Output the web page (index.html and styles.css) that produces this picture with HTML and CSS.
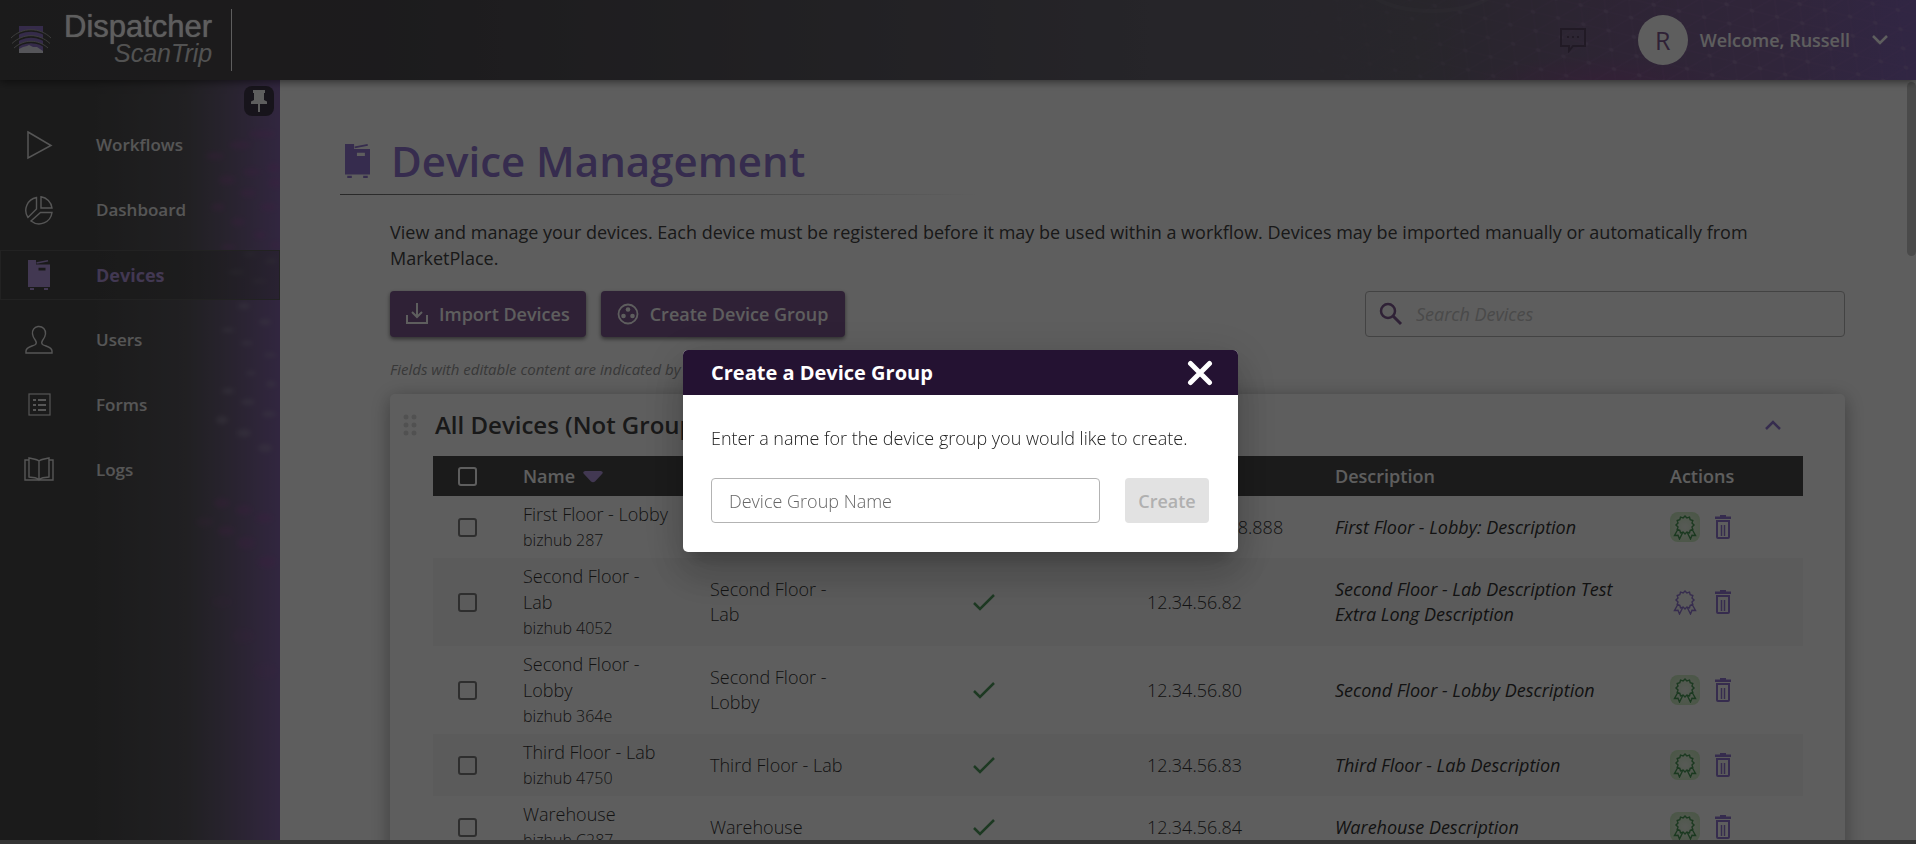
FILE: index.html
```html
<!DOCTYPE html>
<html lang="en">
<head>
<meta charset="utf-8">
<title>Dispatcher ScanTrip - Device Management</title>
<link rel="stylesheet" href="styles.css">
</head>
<body>
<svg class="defs" aria-hidden="true">
  <symbol id="printer" viewBox="0 0 22 30"><path d="M0 0h8v4.500h14V27H0zM10.500 7.700v2.800h7V7.700zM2 28h4v2H2zM16 28h4v2h-4z" fill="currentColor" fill-rule="evenodd"/><path d="M8.500 3L20 .8" stroke="currentColor" stroke-width="1.500"/></symbol>
  <symbol id="award" viewBox="0 0 24 26"><path d="M12 2L13.900 4 16.500 3.200 17.200 5.800 19.800 6.500 19 9.100 21 11 19 12.900 19.800 15.500 17.200 16.200 16.500 18.800 13.900 18 12 20 10.100 18 7.500 18.800 6.800 16.200 4.200 15.500 5 12.900 3 11 5 9.100 4.200 6.500 6.800 5.800 7.500 3.200 10.100 4ZM4.500 16L1.500 21.500 5 21.300 6.500 25 9.500 19M19.500 16L22.500 21.500 19 21.300 17.500 25 14.500 19" fill="none" stroke="currentColor" stroke-width="1.400"/></symbol>
  <symbol id="trash" viewBox="0 0 18 24"><path d="M6 0h6v1.500h5V4H1V1.500h5z" fill="currentColor"/><path d="M3 6h12v16a1 1 0 0 1-1 1H4a1 1 0 0 1-1-1z" fill="none" stroke="currentColor" stroke-width="2"/><path d="M7.500 10v11M10.500 10v11" stroke="currentColor" stroke-width="1.500"/></symbol>
  <symbol id="check" viewBox="0 0 24 18"><path d="M2 10l6 6L22 2" fill="none" stroke="currentColor" stroke-width="2.500"/></symbol>
</svg>

<div class="app">
  <header class="topbar">
    <svg class="topbar-art" viewBox="0 0 616 80" preserveAspectRatio="xMaxYMid slice" aria-hidden="true">
      <defs>
        <pattern id="mesh" width="26" height="18" patternUnits="userSpaceOnUse" patternTransform="rotate(14) skewX(22)">
          <path d="M0 9h26M13 0v18M0 18L26 0" stroke="#b07fc8" stroke-opacity=".22" fill="none"/>
          <ellipse cx="13" cy="9" rx="2.500" ry="1.800" fill="#b9a6c8" fill-opacity=".35"/>
        </pattern>
        <linearGradient id="fade"><stop offset="0" stop-color="#fff" stop-opacity="0"/><stop offset=".6" stop-color="#fff" stop-opacity=".8"/><stop offset="1" stop-color="#fff" stop-opacity=".7"/></linearGradient>
        <mask id="fademask"><rect width="616" height="80" fill="url(#fade)"/></mask>
        <radialGradient id="glow"><stop offset="0" stop-color="#a04a9a" stop-opacity=".4"/><stop offset="1" stop-color="#a04a9a" stop-opacity="0"/></radialGradient>
      </defs>
      <ellipse cx="300" cy="80" rx="130" ry="24" fill="url(#glow)"/>
      <rect width="616" height="80" fill="url(#mesh)" mask="url(#fademask)"/>
      <ellipse cx="132" cy="-14" rx="64" ry="25" fill="none" stroke="#8d8d98" stroke-opacity=".2" stroke-width="4"/>
    </svg>
    <a class="brand" href="#" aria-label="Dispatcher ScanTrip">
      <svg class="brand-mark" viewBox="0 0 42 30" aria-hidden="true">
        <rect x="9" y="1" width="24" height="27" fill="#8f74c9"/>
        <path d="M9 28v-4l4-2 4-1 2-1 4 2 4 0 6 4v2z" fill="#e6e6f2"/>
        <g fill="none" stroke="#4b4b4b" stroke-width="2"><path d="M1 14C12 3 30 3 41 14"/><path d="M2 19.500C13 9 29 9 40 19.500"/><path d="M4 24C14 15 28 15 38 24"/></g>
        <g fill="none" stroke="#a5a5a5" stroke-width="1"><path d="M1 13C12 2 30 2 41 13"/><path d="M2 18.500C13 8 29 8 40 18.500"/><path d="M4 23C14 14 28 14 38 23"/></g>
      </svg>
      <span class="brand-text"><span class="brand-name">Dispatcher</span><span class="brand-sub">ScanTrip</span></span>
    </a>
    <div class="account">
      <button class="icon-button chat" aria-label="Messages">
        <svg width="26" height="26" viewBox="0 0 26 26" fill="none" stroke="currentColor" stroke-width="2"><path d="M1 2h24v17H13l-4 5v-5H1z"/><path d="M7 10h2M12 10h2M17 10h2" stroke-width="2"/></svg>
      </button>
      <span class="avatar">R</span>
      <button class="welcome">Welcome, Russell
        <svg width="16" height="12" viewBox="0 0 16 12" fill="none" stroke="currentColor" stroke-width="2.500"><path d="M1 2l7 7 7-7"/></svg>
      </button>
    </div>
  </header>

  <div class="body">
    <nav class="sidebar" aria-label="Main">
      <svg class="sidebar-art" viewBox="0 0 280 760" preserveAspectRatio="xMaxYMin slice" aria-hidden="true">
        <defs><filter id="soft"><feGaussianBlur stdDeviation="2"/></filter></defs>
        <g filter="url(#soft)" fill="#b34fb0" fill-opacity=".22">
          <ellipse cx="262" cy="54" rx="13" ry="4"/><ellipse cx="240" cy="65" rx="11" ry="4"/><ellipse cx="215" cy="76" rx="9" ry="4"/><ellipse cx="274" cy="88" rx="7" ry="5"/><ellipse cx="252" cy="92" rx="9" ry="4"/><ellipse cx="227" cy="100" rx="8" ry="5"/><ellipse cx="275" cy="103" rx="7" ry="5"/><ellipse cx="248" cy="113" rx="8" ry="4"/><ellipse cx="268" cy="127" rx="8" ry="4"/><ellipse cx="218" cy="127" rx="7" ry="4"/><ellipse cx="238" cy="142" rx="7" ry="4"/><ellipse cx="260" cy="155" rx="6" ry="4"/><ellipse cx="228" cy="167" rx="7" ry="3"/><ellipse cx="276" cy="165" rx="6" ry="3"/>
          <ellipse cx="222" cy="423" rx="8" ry="5"/><ellipse cx="244" cy="430" rx="8" ry="5"/><ellipse cx="264" cy="438" rx="8" ry="5"/><ellipse cx="226" cy="451" rx="8" ry="5"/><ellipse cx="246" cy="463" rx="9" ry="6"/><ellipse cx="267" cy="482" rx="9" ry="6"/><ellipse cx="205" cy="442" rx="9" ry="5" fill-opacity=".12"/><ellipse cx="222" cy="522" rx="11" ry="6" fill-opacity=".08"/><ellipse cx="243" cy="556" rx="11" ry="7" fill-opacity=".1"/><ellipse cx="265" cy="591" rx="11" ry="8" fill-opacity=".1"/>
        </g>
        <g filter="url(#soft)" fill="#a9a0b8" fill-opacity=".38">
          <ellipse cx="250" cy="174" rx="6" ry="2"/><ellipse cx="271" cy="181" rx="6" ry="3"/><ellipse cx="236" cy="192" rx="8" ry="2"/><ellipse cx="259" cy="201" rx="7" ry="2"/><ellipse cx="244" cy="226" rx="6" ry="3"/><ellipse cx="265" cy="242" rx="6" ry="3"/><ellipse cx="228" cy="250" rx="6" ry="2"/><ellipse cx="247" cy="263" rx="6" ry="2"/><ellipse cx="270" cy="275" rx="6" ry="2"/><ellipse cx="251" cy="293" rx="5" ry="2"/><ellipse cx="271" cy="304" rx="5" ry="3"/><ellipse cx="228" cy="311" rx="6" ry="3"/><ellipse cx="248" cy="322" rx="7" ry="3"/><ellipse cx="269" cy="334" rx="7" ry="3"/><ellipse cx="222" cy="340" rx="6" ry="4"/><ellipse cx="244" cy="353" rx="7" ry="4"/><ellipse cx="265" cy="368" rx="7" ry="4"/>
        </g>
      </svg>
      <div class="pin-row">
        <button class="pin" aria-label="Pin menu"><svg width="16" height="22" viewBox="0 0 16 22"><path d="M2 0h12v3h-1v7l3 1.500V14H9v8H7v-8H0v-2.500L3 10V3H2z" fill="currentColor"/></svg></button>
      </div>
      <a class="nav-item" href="#"><svg width="30" height="30" viewBox="0 0 30 30" fill="none" stroke="currentColor" stroke-width="1.500"><path d="M4 2l23 13.500L4 28z"/></svg>Workflows</a>
      <a class="nav-item" href="#"><svg width="30" height="30" viewBox="0 0 30 30" fill="none" stroke="currentColor" stroke-width="1.400"><path d="M12.500 2.500A13 13 0 0 0 4 22.500l8.500-8.500zM17 1.800A13 13 0 0 1 28 13H17zM28 17.500H16.500L7 26A13 13 0 0 0 28 17.500z"/></svg>Dashboard</a>
      <a class="nav-item active" href="#" aria-current="page"><svg width="30" height="30" viewBox="-4 0 30 30"><use href="#printer" width="22" height="30"/></svg>Devices</a>
      <a class="nav-item" href="#"><svg width="30" height="30" viewBox="0 0 30 30" fill="none" stroke="currentColor" stroke-width="1.400"><path d="M14 1.500c-4 .5-6 4-5.500 7.500.3 3 1.500 4.500 3 6.500 1 1.500 1 3 0 4C8 21.500 2 22 2 26v2h26v-2c0-4-6-4.500-9.500-6.500-1-1-1-2.500 0-4 1.500-2 2.700-3.500 3-6.500C22 5 19 1 14 1.500z"/></svg>Users</a>
      <a class="nav-item" href="#"><svg width="30" height="30" viewBox="0 0 30 30" fill="none" stroke="currentColor"><rect x="5" y="4" width="21" height="21" stroke-width="1.200"/><path d="M9 10h3M9 15h3M9 20h3M14 10h8M14 15h8M14 20h8" stroke-width="2"/></svg>Forms</a>
      <a class="nav-item" href="#"><svg width="30" height="30" viewBox="0 0 30 30" fill="none" stroke="currentColor" stroke-width="1.400"><path d="M15 6c-2-2-6-2-10-3v19c4 1 8 0 10 3 2-3 6-2 10-3V3c-4 1-8 1-10 3zM15 6v19M5 5H1v20h28V5h-4"/></svg>Logs</a>
    </nav>

    <main class="content">
      <h1 class="page-title"><svg class="title-icon" viewBox="0 0 22 30" preserveAspectRatio="none" aria-hidden="true"><use href="#printer"/></svg>Device Management</h1>
      <div class="inner">
        <p class="intro">View and manage your devices. Each device must be registered before it may be used within a workflow. Devices may be imported manually or automatically from MarketPlace.</p>
        <div class="toolbar">
          <button class="primary"><svg width="22" height="22" viewBox="0 0 22 22" fill="none" stroke="currentColor" stroke-width="2"><path d="M11 0v14M6 9l5 5 5-5M1 12v8h20v-8"/></svg>Import Devices</button>
          <button class="primary"><svg width="22" height="22" viewBox="0 0 22 22"><circle cx="11" cy="11" r="9.500" fill="none" stroke="currentColor" stroke-width="1.800"/><g fill="currentColor"><circle cx="11" cy="6.500" r="2.300"/><circle cx="6.500" cy="13" r="2.300"/><circle cx="15.500" cy="13" r="2.300"/></g></svg>Create Device Group</button>
          <label class="search"><svg width="24" height="24" viewBox="0 0 24 24" fill="none" stroke="currentColor" aria-hidden="true"><circle cx="9" cy="9" r="7" stroke-width="2.500"/><path d="M14 14l8 8" stroke-width="3"/></svg><input type="search" placeholder="Search Devices" aria-label="Search Devices"></label>
        </div>
        <p class="note">Fields with editable content are indicated by an italic font.</p>

        <section class="card">
          <div class="card-head">
            <svg class="drag" width="14" height="22" viewBox="0 0 14 22" fill="currentColor" aria-hidden="true"><circle cx="3" cy="3" r="2.500"/><circle cx="11" cy="3" r="2.500"/><circle cx="3" cy="11" r="2.500"/><circle cx="11" cy="11" r="2.500"/><circle cx="3" cy="19" r="2.500"/><circle cx="11" cy="19" r="2.500"/></svg>
            <h2>All Devices (Not Grouped)</h2>
            <button class="icon-button collapse" aria-label="Collapse group"><svg width="16" height="12" viewBox="0 0 16 12" fill="none" stroke="currentColor" stroke-width="2.500"><path d="M1 10l7-7 7 7"/></svg></button>
          </div>
          <table class="devices">
            <colgroup><col class="c-check"><col class="c-name"><col class="c-name"><col class="c-reg"><col class="c-ip"><col class="c-desc"><col class="c-act"></colgroup>
            <thead><tr>
              <th class="tick"><input type="checkbox" aria-label="Select all devices"></th>
              <th>Name <svg class="sort" width="20" height="12" viewBox="0 0 20 12" aria-hidden="true"><path d="M2 0h16q3 1 1 3l-7 7.500q-2 1.500-4 0L1 3Q-1 1 2 0z" fill="currentColor"/></svg></th>
              <th>Location</th><th class="reg">Registered</th><th class="ip">Address</th><th>Description</th><th>Actions</th>
            </tr></thead>
            <tbody>
              <tr><td class="tick"><input type="checkbox" aria-label="Select First Floor - Lobby"></td><td class="name">First Floor - Lobby<small>bizhub 287</small></td><td>First Floor - Lobby</td><td class="reg"><svg width="24" height="18"><use href="#check"/></svg></td><td class="ip">888.888.888.888</td><td class="desc">First Floor - Lobby: Description</td><td><div class="actions"><button class="award on" aria-label="Certificate"><svg width="24" height="26"><use href="#award"/></svg></button><button class="trash" aria-label="Delete"><svg width="18" height="24"><use href="#trash"/></svg></button></div></td></tr>
              <tr><td class="tick"><input type="checkbox" aria-label="Select Second Floor - Lab"></td><td class="name">Second Floor - Lab<small>bizhub 4052</small></td><td>Second Floor - Lab</td><td class="reg"><svg width="24" height="18"><use href="#check"/></svg></td><td class="ip">12.34.56.82</td><td class="desc">Second Floor - Lab Description Test Extra Long Description</td><td><div class="actions"><button class="award" aria-label="Certificate"><svg width="24" height="26"><use href="#award"/></svg></button><button class="trash" aria-label="Delete"><svg width="18" height="24"><use href="#trash"/></svg></button></div></td></tr>
              <tr><td class="tick"><input type="checkbox" aria-label="Select Second Floor - Lobby"></td><td class="name">Second Floor - Lobby<small>bizhub 364e</small></td><td>Second Floor - Lobby</td><td class="reg"><svg width="24" height="18"><use href="#check"/></svg></td><td class="ip">12.34.56.80</td><td class="desc">Second Floor - Lobby Description</td><td><div class="actions"><button class="award on" aria-label="Certificate"><svg width="24" height="26"><use href="#award"/></svg></button><button class="trash" aria-label="Delete"><svg width="18" height="24"><use href="#trash"/></svg></button></div></td></tr>
              <tr><td class="tick"><input type="checkbox" aria-label="Select Third Floor - Lab"></td><td class="name">Third Floor - Lab<small>bizhub 4750</small></td><td>Third Floor - Lab</td><td class="reg"><svg width="24" height="18"><use href="#check"/></svg></td><td class="ip">12.34.56.83</td><td class="desc">Third Floor - Lab Description</td><td><div class="actions"><button class="award on" aria-label="Certificate"><svg width="24" height="26"><use href="#award"/></svg></button><button class="trash" aria-label="Delete"><svg width="18" height="24"><use href="#trash"/></svg></button></div></td></tr>
              <tr><td class="tick"><input type="checkbox" aria-label="Select Warehouse"></td><td class="name">Warehouse<small>bizhub C287</small></td><td>Warehouse</td><td class="reg"><svg width="24" height="18"><use href="#check"/></svg></td><td class="ip">12.34.56.84</td><td class="desc">Warehouse Description</td><td><div class="actions"><button class="award on" aria-label="Certificate"><svg width="24" height="26"><use href="#award"/></svg></button><button class="trash" aria-label="Delete"><svg width="18" height="24"><use href="#trash"/></svg></button></div></td></tr>
            </tbody>
          </table>
        </section>
      </div>
      <div class="scroll-thumb"></div>
    </main>
  </div>
</div>

<div class="overlay">
  <div class="modal" role="dialog" aria-modal="true" aria-labelledby="modal-title">
    <div class="modal-head">
      <h2 id="modal-title">Create a Device Group</h2>
      <button class="icon-button close" aria-label="Close"><svg width="26" height="26" viewBox="0 0 26 26" stroke="currentColor" stroke-width="5" stroke-linecap="round"><path d="M3.500 3.500l19 19M22.500 3.500l-19 19"/></svg></button>
    </div>
    <form class="modal-body">
      <label for="group-name">Enter a name for the device group you would like to create.</label>
      <div class="modal-row">
        <input id="group-name" type="text" placeholder="Device Group Name">
        <button type="button" class="create" disabled>Create</button>
      </div>
    </form>
  </div>
</div>
</body>
</html>
```

FILE: styles.css
```css
* { box-sizing: border-box; }

body {
  margin: 0;
  height: 100vh;
  overflow: hidden;
  background: #8d8d8d;
  color: #444;
  font-family: "Open Sans", "Noto Sans", sans-serif;
  font-size: 18px;
  line-height: 26px;
}

h1, h2, p { margin: 0; }
button, input { font: inherit; color: inherit; }
button { padding: 0; border: 0; background: none; }
a { color: inherit; text-decoration: none; }
svg { display: block; flex: none; }
.defs { position: absolute; width: 0; height: 0; }

.app {
  display: flex;
  flex-direction: column;
  height: calc(100vh - 4px);
  overflow: hidden;
  background: #fff;
}

/* Top bar */
.topbar {
  position: relative;
  z-index: 2;
  display: flex;
  flex: none;
  align-items: center;
  justify-content: space-between;
  height: 80px;
  padding: 0 28px 0 10px;
  background: linear-gradient(90deg, #4b4b4b 0, #4d4b4f 20%, #67646f 60%, #6c6775 74%, #7d6390 85%, #84669f 93%, #8567b8 100%);
  box-shadow: 0 2px 8px rgba(0, 0, 0, .5);
}
.topbar-art { position: absolute; top: 0; right: 0; width: 616px; height: 80px; }

.brand {
  display: flex;
  align-items: center;
  gap: 12px;
  height: 62px;
  padding-right: 19px;
  border-right: 1px solid #fff;
  color: #fff;
  font-family: "Liberation Sans", Arial, sans-serif;
}
.brand-mark { width: 42px; height: 30px; }
.brand-text { display: flex; flex-direction: column; align-items: flex-end; line-height: 26px; font-size: 31px; }
.brand-name { text-shadow: 0 0 1px #fff; }
.brand-sub { font-size: 25px; font-style: italic; color: #ddd; }

.account { position: relative; display: flex; align-items: center; }
.chat { margin-right: 52px; color: #5b4866; }
.avatar {
  display: grid;
  place-items: center;
  width: 50px;
  height: 50px;
  margin-right: 12px;
  border-radius: 50%;
  background: #fff;
  color: #7f5992;
  font-size: 25px;
  font-weight: 500;
}
.welcome { display: flex; align-items: center; gap: 22px; color: #fff; font-weight: 600; }

/* Sidebar */
.body { display: flex; flex: 1; min-height: 0; }
.sidebar {
  position: relative;
  flex: none;
  width: 280px;
  background: linear-gradient(90deg, #4b4b4b 0, #4b4b4b 34%, #59575d 66%, #6b5f7a 80%, #8768ac 100%);
  color: #e8e8e8;
}
.sidebar-art { position: absolute; top: 0; right: 0; width: 280px; height: 100%; }
.pin-row { position: relative; display: flex; justify-content: flex-end; height: 40px; padding: 6px 6px 0 0; }
.pin {
  display: grid;
  place-items: center;
  width: 30px;
  height: 30px;
  border-radius: 8px;
  background: #40384b;
  color: #fff;
}
.nav-item {
  position: relative;
  display: flex;
  align-items: center;
  gap: 42px;
  height: 50px;
  margin-bottom: 15px;
  padding-left: 23px;
  border: 1px solid transparent;
  font-size: 17px;
  font-weight: 600;
}
.nav-item.active {
  border-color: #5c5c5c;
  background: linear-gradient(90deg, #474747, rgba(71, 71, 71, .35));
  color: #b297de;
  font-size: 18px;
  font-weight: 700;
}

/* Page content */
.content { position: relative; flex: 1; min-width: 0; overflow: hidden; padding: 50px 71px 0 60px; }
.page-title {
  display: flex;
  align-items: center;
  gap: 21px;
  height: 65px;
  padding: 0 0 4px 5px;
  background: linear-gradient(90deg, #6d6d6d, #c0c0c0 60%, transparent) left bottom / 640px 1px no-repeat;
  color: #9277d3;
  font-size: 42px;
  font-weight: 600;
}
.title-icon { width: 25px; height: 34px; }
.inner { padding-left: 50px; }
.intro { margin-top: 24px; }
.toolbar { display: flex; gap: 15px; margin-top: 20px; }
.primary {
  display: flex;
  align-items: center;
  gap: 11px;
  height: 46px;
  padding: 0 16px;
  border-radius: 4px;
  background: #7f5992;
  box-shadow: 0 2px 4px rgba(0, 0, 0, .5);
  color: #fff;
  font-weight: 600;
}
.search {
  display: flex;
  align-items: center;
  gap: 13px;
  width: 480px;
  height: 46px;
  margin-left: auto;
  padding: 0 13px;
  border: 1px solid #b5b5b5;
  border-radius: 4px;
  color: #7f5992;
}
.search input { flex: 1; min-width: 0; padding: 0; border: 0; outline: 0; background: none; font-style: italic; }
.search input::placeholder { color: #c8c8c8; opacity: 1; }
.note { margin-top: 19px; color: #999; font-size: 15px; font-style: italic; }

.card {
  height: 600px;
  margin-top: 12px;
  padding: 0 42px 0 43px;
  border-radius: 5px;
  background: #fff;
  box-shadow: 0 4px 20px rgba(0, 0, 0, .35);
}
.card-head { display: flex; align-items: center; height: 62px; margin-left: -30px; padding-right: 22px; }
.card-head h2 { flex: 1; padding-left: 18px; font-size: 24px; font-weight: 600; }
.drag { color: #dcdcdc; }
.collapse { color: #9277d3; }

.devices { width: 100%; border-collapse: collapse; table-layout: fixed; line-height: 25px; }
.c-check { width: 90px; }
.c-name { width: 187px; }
.c-reg { width: 174px; }
.c-ip { width: 264px; }
.c-act { width: 133px; }
.devices th { height: 40px; padding: 0; background: #4b4b4b; color: #fff; font-weight: 600; text-align: left; }
.devices td { padding: 5px 40px 5px 0; font-weight: 300; color: #333; }
.devices tbody tr:nth-child(even) { background: #f7f7f7; }
.devices .name { line-height: 26px; }
.devices small { display: block; font-size: 16px; }
.devices .tick { padding: 0 0 0 25px; }
.devices .reg { padding: 0; text-align: center; }
.devices td.reg { color: #4f9a5e; }
.devices .reg svg { margin: 0 auto; }
.devices .ip { padding-left: 76px; padding-right: 0; }
.devices .desc { padding-right: 20px; font-style: italic; font-weight: 400; }
.devices td:last-child { padding: 0; }
.sort { display: inline-block; margin-left: 3px; color: #b297de; }

.tick input {
  display: block;
  appearance: none;
  width: 19px;
  height: 19px;
  margin: 0;
  border: 2px solid #7d7d7d;
  border-radius: 3px;
}
th.tick input { border-color: #fff; }

.actions { display: flex; align-items: center; gap: 14px; color: #9277d3; }
.award { display: grid; place-items: center; width: 30px; height: 30px; border-radius: 8px; }
.award.on { background: radial-gradient(#eef5ea, #c4e8b8); color: #4a9a57; }

.scroll-thumb {
  position: absolute;
  top: 2px;
  right: 0;
  width: 9px;
  height: 174px;
  border-radius: 5px;
  background: #cacaca;
}

/* Dialog */
.overlay {
  position: fixed;
  inset: 0;
  z-index: 10;
  display: grid;
  place-items: center;
  padding: 58px 0 0 5px;
  background: rgba(0, 0, 0, .63);
}
.modal {
  width: 555px;
  border-radius: 5px;
  overflow: hidden;
  background: #fff;
  box-shadow: 0 11px 15px -7px rgba(0, 0, 0, .2), 0 24px 38px 3px rgba(0, 0, 0, .14), 0 9px 46px 8px rgba(0, 0, 0, .12);
  color: #222;
}
.modal-head {
  display: flex;
  align-items: center;
  justify-content: space-between;
  height: 45px;
  padding: 0 25px 0 28px;
  background: #241232;
  color: #fff;
}
.modal-head h2 { font-size: 20px; font-weight: 700; }
.modal-body { padding: 30px 29px 29px 28px; font-weight: 300; }
.modal-body label { display: block; }
.modal-row { display: flex; gap: 25px; margin-top: 27px; }
.modal-row input {
  flex: 1;
  min-width: 0;
  height: 45px;
  padding: 0 17px;
  border: 1px solid #b3b3b3;
  border-radius: 4px;
  outline: 0;
}
.modal-row input::placeholder { color: #666; opacity: 1; }
.create { width: 84px; border-radius: 4px; background: #e2e2e2; color: #b0b0b0; font-weight: 600; }
```
